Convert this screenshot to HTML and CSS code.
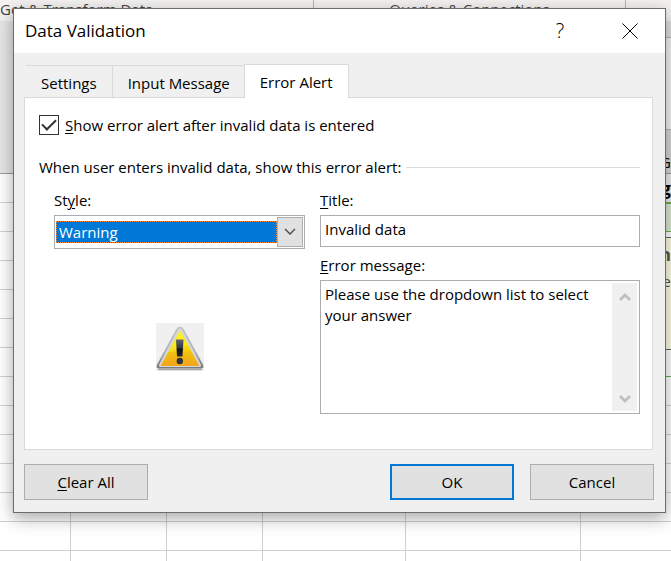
FILE: index.html
```html
<!DOCTYPE html>
<html lang="en">
<head>
<meta charset="utf-8">
<title>Data Validation</title>
<link rel="stylesheet" href="styles.css">
</head>
<body>
<div class="workbook">
  <div class="ribbon">
    <div class="ribbon-group ribbon-first"><span>Get &amp; Transform Data</span></div>
    <div class="ribbon-group"><span>Queries &amp; Connections</span></div>
    <div class="ribbon-rest"></div>
  </div>
  <div class="frame"></div>
  <div class="sheet">
    <div class="col col-a"></div>
    <div class="col col-b"></div>
    <div class="col col-b"></div>
    <div class="col col-c"></div>
    <div class="col col-d"></div>
    <div class="col-rest"></div>
  </div>
  <div class="side">
    <div class="side-gap"></div>
    <div class="side-formula"></div>
    <div class="side-header">G</div>
    <div class="side-title">g</div>
    <div class="side-green"></div>
    <div class="side-note"><b>h</b><span>e</span></div>
    <div class="side-blank"></div>
  </div>
</div>

<form class="dialog" role="dialog" aria-labelledby="dialog-title">
  <header class="titlebar">
    <h1 id="dialog-title">Data Validation</h1>
    <button type="button" class="title-btn help" aria-label="Help">?</button>
    <button type="button" class="title-btn" aria-label="Close">
      <svg width="16" height="16" viewBox="0 0 16 16"><path d="M.5.5l15 15M15.500.5l-15 15" fill="none" stroke="#000" stroke-width="1"/></svg>
    </button>
  </header>
  <div class="content">
    <div class="tabs" role="tablist">
      <button type="button" role="tab" class="tab">Settings</button>
      <button type="button" role="tab" class="tab">Input Message</button>
      <button type="button" role="tab" class="tab active" aria-selected="true">Error Alert</button>
    </div>
    <div class="panel">
      <div class="check-row">
        <input type="checkbox" id="show" checked>
        <label for="show"><u>S</u>how error alert after invalid data is entered</label>
      </div>
      <div class="section-row"><span>When user enters invalid data, show this error alert:</span><i class="rule"></i></div>
      <div class="fields">
        <div class="left">
          <label for="style">St<u>y</u>le:</label>
          <div class="combo">
            <select id="style"><option>Stop</option><option selected>Warning</option><option>Information</option></select>
            <span class="combo-arrow"><svg width="12" height="8" viewBox="0 0 12 8"><path d="M1 1l5 5 5-5" fill="none" stroke="#444" stroke-width="1.3"/></svg></span>
          </div>
          <svg class="warning" width="48" height="48" viewBox="0 0 48 48">
            <defs>
              <linearGradient id="metal" x1="0" y1="0" x2="0" y2="1"><stop offset="0" stop-color="#c2c4c6"/><stop offset=".6" stop-color="#b0b3b7"/><stop offset="1" stop-color="#74777b"/></linearGradient>
              <linearGradient id="gold" x1="0" y1="0" x2="0" y2="1"><stop offset="0" stop-color="#fff200"/><stop offset=".4" stop-color="#fae500"/><stop offset=".65" stop-color="#efc010"/><stop offset="1" stop-color="#f5a21c"/></linearGradient>
              <linearGradient id="ink" x1="0" y1="0" x2="0" y2="1"><stop offset="0" stop-color="#62656b"/><stop offset=".5" stop-color="#35383e"/><stop offset=".55" stop-color="#111318"/><stop offset="1" stop-color="#24262b"/></linearGradient>
            </defs>
            <path d="M2 46.500h44" stroke="#aaa" stroke-width="1.500"/>
            <path d="M24 3.500Q26.500 3.500 28 6.500L47 41.500Q48.500 45.500 44.500 45.500H3.500Q-.5 45.500 1 41.500L20 6.500Q21.500 3.500 24 3.500z" fill="url(#metal)"/>
            <path d="M24 5.500Q25.500 5.500 26.500 7.500L45 42Q45.500 44 43.500 44H4.500Q2.500 44 3 42L21.500 7.500Q22.500 5.500 24 5.500z" fill="#d6d8da"/>
            <path d="M24 7.500L43.500 43H4.500z" fill="url(#gold)"/>
            <path d="M24 8L31 21Q20 29 12.500 29z" fill="#fff95c" opacity=".3"/>
            <path d="M20 16.500h7.500l-1 17h-5.500z" fill="url(#ink)"/>
            <circle cx="23.800" cy="38" r="3.200" fill="#303238"/>
          </svg>
        </div>
        <div class="right">
          <label for="title"><u>T</u>itle:</label>
          <input type="text" id="title" value="Invalid data">
          <label for="message" class="message-label"><u>E</u>rror message:</label>
          <div class="message-box">
            <textarea id="message">Please use the dropdown list to select your answer</textarea>
            <div class="scrollbar">
              <svg width="12" height="10" viewBox="0 0 12 10"><path d="M1 8l5-5 5 5" fill="none" stroke="#bfbfbf" stroke-width="2.800"/></svg>
              <svg width="12" height="10" viewBox="0 0 12 10"><path d="M1 2l5 5 5-5" fill="none" stroke="#bfbfbf" stroke-width="2.800"/></svg>
            </div>
          </div>
        </div>
      </div>
    </div>
    <footer class="actions">
      <button type="button" class="btn clear"><u>C</u>lear All</button>
      <button type="submit" class="btn ok">OK</button>
      <button type="button" class="btn">Cancel</button>
    </footer>
  </div>
</form>
</body>
</html>
```
FILE: styles.css
```css
* { box-sizing: border-box; }

body {
  margin: 0;
  font: 15px/20px "Open Sans", "Noto Sans", sans-serif;
  color: #000;
  overflow: hidden;
}

button, input, select, textarea { font: inherit; color: inherit; margin: 0; }
u { text-decoration-thickness: 1px; text-underline-offset: 2px; }

/* Workbook behind the dialog */
.workbook {
  position: relative;
  display: flex;
  flex-direction: column;
  height: 100vh;
  background: #fff;
}
.ribbon {
  display: flex;
  flex: none;
  height: 21px;
  background: #f3f2f1;
  color: #444;
  line-height: 18px;
  white-space: nowrap;
}
.ribbon-group {
  display: flex;
  justify-content: center;
  width: 312px;
  border-right: 1px solid #b5b5b5;
}
.ribbon-first { justify-content: flex-start; width: 314px; }
.frame {
  flex: none;
  height: 153px;
  background: #e6e6e6;
  border-bottom: 1px solid #9b9b9b;
}
.sheet {
  display: flex;
  flex: 1;
  background: repeating-linear-gradient(#fff 0 28px, #d0d0d0 28px 29px);
}
.col { border-right: 1px solid #d0d0d0; }
.col-a { width: 71px; }
.col-b { width: 96px; }
.col-c { width: 143px; }
.col-d { width: 175px; }
.col-rest { flex: 1; }

.side {
  position: absolute;
  top: 21px;
  right: 0;
  width: 8px;
}
.side-gap { height: 17px; background: #e0e0e0; border-bottom: 1px solid #b5b5b5; }
.side-formula { height: 92px; background: #f3f3f3; border-bottom: 1px solid #b5b5b5; }
.side-header { height: 44px; padding-top: 22px; background: #d6d6d6; border-bottom: 1px solid #9b9b9b; }
.side-title { height: 30px; padding-top: 4px; background: #eee; font-size: 18px; font-weight: 700; border-bottom: 2px solid #70ad47; }
.side-green { height: 28px; background: #d9ead3; border-bottom: 1px solid #70ad47; }
.side-header, .side-title, .side-note { display: flex; justify-content: flex-end; }
.side-note {
  flex-direction: column;
  justify-content: flex-start;
  align-items: flex-end;
  height: 113px;
  margin-top: 5px;
  padding-top: 4px;
  background: #ffffe1;
  border: solid #666;
  border-width: 1px 0;
  color: #555;
}
.side-note b, .side-note span { line-height: 26px; }
.side-note b { font-size: 17px; }
.side-blank { height: 27px; border-bottom: 1px solid #70ad47; }

/* Dialog */
.dialog {
  position: absolute;
  top: 8px;
  left: 13px;
  right: 5px;
  background: #f0f0f0;
  border: 1px solid #6b6b6b;
  box-shadow: 0 5px 16px rgba(0, 0, 0, .35);
}
.titlebar {
  display: flex;
  align-items: center;
  height: 44px;
  padding-left: 11px;
  background: #fff;
}
.titlebar h1 { flex: 1; margin: 0; font-size: 17px; line-height: 24px; font-weight: 400; }
.title-btn {
  display: flex;
  align-items: center;
  justify-content: center;
  width: 70px;
  height: 44px;
  padding: 0;
  border: 0;
  background: none;
}
.help { font-size: 20px; font-weight: 300; }

.content { padding: 11px 11px 12px 10px; }
.tabs { display: flex; align-items: flex-end; }
.tab {
  height: 32px;
  padding: 2px 14px 0 15px;
  background: #f0f0f0;
  border: solid #d9d9d9;
  border-width: 1px 1px 0 0;
}
.tab:first-child { margin-left: 2px; padding: 2px 15px 0; }
.tab.active {
  height: 34px;
  margin: 0 0 -1px -1px;
  padding: 0 15px;
  background: #fff;
  border-width: 1px 1px 0;
  z-index: 1;
}

.panel {
  height: 353px;
  margin-right: 1px;
  padding: 17px 12px 0 14px;
  background: #fff;
  border: 1px solid #d9d9d9;
}
.check-row { display: flex; align-items: center; gap: 6px; height: 20px; line-height: 22px; }
.check-row input {
  appearance: none;
  width: 20px;
  height: 20px;
  border: 1px solid #333;
  background: #fff;
  display: grid;
  place-items: center;
}
.check-row input:checked::before {
  content: "";
  width: 12px;
  height: 6px;
  margin-bottom: 4px;
  border: solid #333;
  border-width: 0 0 2px 2px;
  transform: rotate(-45deg);
}
.section-row { display: flex; align-items: center; gap: 5px; height: 20px; margin-top: 22px; white-space: nowrap; }
.rule { flex: 1; height: 1px; background: #dcdcdc; }

.fields { display: flex; gap: 15px; margin: 13px 0 0 15px; }
.left { display: flex; flex-direction: column; width: 251px; }
.right { display: flex; flex: 1; flex-direction: column; min-width: 0; }
.fields label { height: 20px; margin-bottom: 5px; }
.combo {
  display: flex;
  height: 34px;
  padding: 1px;
  border: 1px solid #abadb3;
  background: #fff;
}
.combo select {
  appearance: none;
  flex: 1;
  min-width: 0;
  margin: 4px 0;
  padding: 0 0 0 2px;
  border: 1px dotted #ff8728;
  border-radius: 0;
  background: #0078d7;
  color: #fff;
}
.combo-arrow {
  display: flex;
  align-items: center;
  justify-content: center;
  width: 26px;
  border: 1px solid #adadad;
  background: #e1e1e1;
}
.warning { align-self: center; margin-top: 74px; background: #f0f0f0; }

.right input {
  width: 100%;
  height: 32px;
  padding: 0 4px 4px;
  border: 1px solid #abadb3;
}
.fields .message-label { margin: 8px 0 5px; }
.message-box {
  display: flex;
  height: 134px;
  padding: 2px;
  border: 1px solid #abadb3;
}
.message-box textarea {
  flex: 1;
  min-width: 0;
  padding: 1px 2px 0;
  border: 0;
  resize: none;
  overflow: hidden;
  line-height: 21px;
}
.scrollbar {
  display: flex;
  flex-direction: column;
  align-items: center;
  justify-content: space-between;
  width: 25px;
  padding: 9px 0 7px;
  background: #f0f0f0;
}

.actions { display: flex; gap: 16px; margin-top: 14px; }
.btn {
  width: 124px;
  height: 36px;
  padding: 0;
  border: 1px solid #adadad;
  background: #e1e1e1;
}
.clear { margin-right: auto; }
.ok { border: 2px solid #0078d7; }
```
